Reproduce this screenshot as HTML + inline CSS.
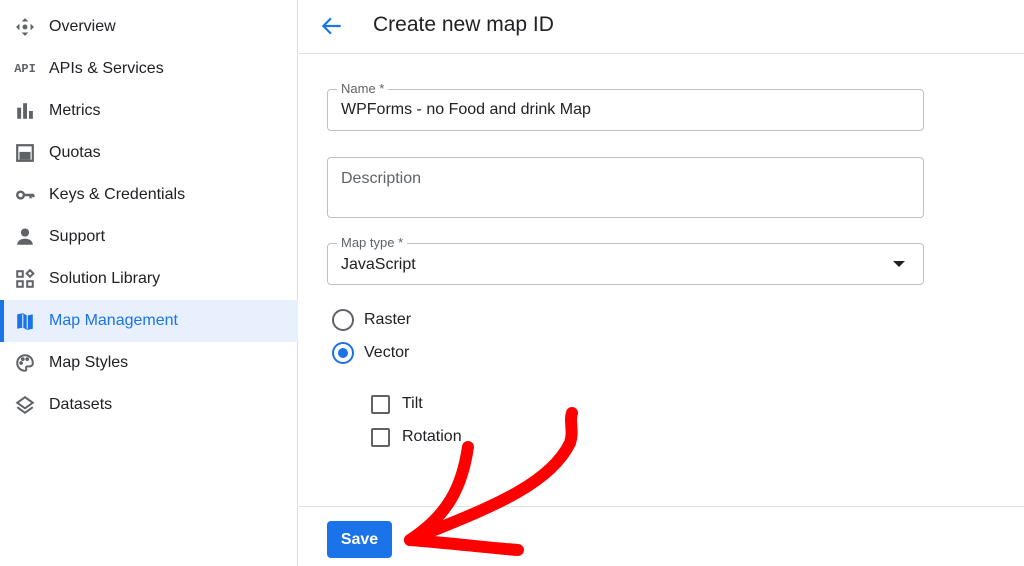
<!DOCTYPE html>
<html><head><style>
*{box-sizing:border-box;margin:0;padding:0}
body{width:1024px;height:566px;overflow:hidden;background:#fff;font-family:"Liberation Sans",Arial,sans-serif;color:#202124;position:relative}
.sb{position:absolute;left:0;top:0;width:298px;height:566px;border-right:1px solid #e0e0e0}
.it{position:absolute;left:0;width:298px;height:42px;display:flex;align-items:center;font-size:16px;color:#202124}
.it .ic{position:absolute;left:15px;width:20px;height:20px;display:flex;align-items:center;justify-content:center;color:#5f6368}
.it span.t{position:absolute;left:49px}
.act{background:#e8f0fe;color:#1a73e8}
.act:before{content:"";position:absolute;left:0;top:0;width:4px;height:42px;background:#1a73e8}
.hd{position:absolute;left:299px;top:0;right:0;height:54px;border-bottom:1px solid #e0e0e0}
.fld{position:absolute;left:327px;width:597px;border:1px solid #bdc1c6;border-radius:4px}
.lbl{position:absolute;left:9px;top:-9px;background:#fff;padding:0 4px;font-size:13px;color:#5f6368}
.val{position:absolute;left:13px;font-size:16px;color:#202124}
.rad{position:absolute;left:332px;width:22px;height:22px;border:2px solid #5f6368;border-radius:50%}
.cb{position:absolute;left:371px;width:19px;height:19px;border:2px solid #5f6368;border-radius:2px}
.lt{position:absolute;font-size:16px;color:#202124}
</style></head><body>
<div class="sb">
<div class="it" style="top:6px"><div class="ic"><svg width="20" height="20" viewBox="0 0 18 18" fill="#5f6368"><path d="M9 1l3 3H6zM9 17l-3-3h6zM1 9l3-3v6zM17 9l-3 3V6z"/><circle cx="9" cy="9" r="2.2"/></svg></div><span class="t">Overview</span></div>
<div class="it" style="top:48px"><div class="ic" style="font-family:'Liberation Mono',monospace;font-size:12px;font-weight:bold;width:24px;left:13px">API</div><span class="t">APIs &amp; Services</span></div>
<div class="it" style="top:90px"><div class="ic"><svg width="20" height="20" viewBox="0 0 18 18" fill="#5f6368"><rect x="2" y="6" width="3.5" height="10"/><rect x="7.3" y="2" width="3.5" height="14"/><rect x="12.6" y="9" width="3.5" height="7"/></svg></div><span class="t">Metrics</span></div>
<div class="it" style="top:132px"><div class="ic"><svg width="20" height="20" viewBox="0 0 18 18" fill="none" stroke="#5f6368" stroke-width="2"><rect x="2" y="2" width="14" height="14"/><rect x="4" y="8" width="10" height="7" fill="#5f6368" stroke="none"/></svg></div><span class="t">Quotas</span></div>
<div class="it" style="top:174px"><div class="ic"><svg width="20" height="20" viewBox="0 0 18 18" fill="none" stroke="#5f6368" stroke-width="2.2"><circle cx="5" cy="9" r="3"/><path d="M8 9h9M14 9v3M16.5 9v2"/></svg></div><span class="t">Keys &amp; Credentials</span></div>
<div class="it" style="top:216px"><div class="ic"><svg width="20" height="20" viewBox="0 0 18 18" fill="#5f6368"><circle cx="9" cy="5" r="3.7"/><path d="M2 16c0-4 4-5.5 7-5.5s7 1.5 7 5.5z"/></svg></div><span class="t">Support</span></div>
<div class="it" style="top:258px"><div class="ic"><svg width="20" height="20" viewBox="0 0 18 18" fill="none" stroke="#5f6368" stroke-width="1.8"><rect x="2" y="2" width="5" height="5"/><rect x="2" y="11" width="5" height="5"/><rect x="11" y="11" width="5" height="5"/><path d="M13.5 1l3 3-3 3-3-3z"/></svg></div><span class="t">Solution Library</span></div>
<div class="it act" style="top:300px"><div class="ic"><svg width="20" height="20" viewBox="0 0 18 18" fill="#1a73e8"><path d="M2 3l5-1 4 2 5-1v13l-5 1-4-2-5 1z"/><path d="M7 3v12M11 4v12" stroke="#e8f0fe" stroke-width="1"/></svg></div><span class="t">Map Management</span></div>
<div class="it" style="top:342px"><div class="ic"><svg width="20" height="20" viewBox="0 0 18 18" fill="none" stroke="#5f6368" stroke-width="1.8"><path d="M9 2a7 7 0 1 0 0 14c1 0 1.5-1 1-2s0-2 1.5-2H14a3 3 0 0 0 2-3c0-4-3-7-7-7z"/><circle cx="5.5" cy="9" r=".8" fill="#5f6368"/><circle cx="7" cy="5.5" r=".8" fill="#5f6368"/><circle cx="11" cy="5.5" r=".8" fill="#5f6368"/></svg></div><span class="t">Map Styles</span></div>
<div class="it" style="top:384px"><div class="ic"><svg width="20" height="20" viewBox="0 0 18 18" fill="none" stroke="#5f6368" stroke-width="1.8"><path d="M9 2l7 5-7 5-7-5z"/><path d="M2 11l7 5 7-5"/></svg></div><span class="t">Datasets</span></div>
</div>
<div class="hd">
<svg style="position:absolute;left:20px;top:13px" width="26" height="26" viewBox="0 0 24 24" fill="none" stroke="#1a73e8" stroke-width="2"><path d="M20 12H5M11 5l-7 7 7 7"/></svg>
<div style="position:absolute;left:74px;top:13px;font-size:21px;color:#202124">Create new map ID</div>
</div>
<div class="fld" style="top:89px;height:42px"><div class="lbl">Name *</div><div class="val" style="top:11px">WPForms - no Food and drink Map</div></div>
<div class="fld" style="top:157px;height:61px"><div class="val" style="top:12px;color:#5f6368">Description</div></div>
<div class="fld" style="top:243px;height:42px"><div class="lbl">Map type *</div><div class="val" style="top:12px">JavaScript</div><div style="position:absolute;right:18px;top:17px;border-left:6px solid transparent;border-right:6px solid transparent;border-top:6px solid #202124"></div></div>
<div class="rad" style="top:309px"></div><div class="lt" style="left:364px;top:311px">Raster</div>
<div class="rad" style="top:342px;border-color:#1a73e8"><div style="position:absolute;left:4px;top:4px;width:10px;height:10px;border-radius:50%;background:#1a73e8"></div></div><div class="lt" style="left:364px;top:344px">Vector</div>
<div class="cb" style="top:395px"></div><div class="lt" style="left:402px;top:395px">Tilt</div>
<div class="cb" style="top:428px"></div><div class="lt" style="left:402px;top:428px">Rotation</div>
<div style="position:absolute;left:299px;right:0;top:506px;border-top:1px solid #e0e0e0"></div>
<div style="position:absolute;left:327px;top:521px;width:65px;height:37px;background:#1a73e8;border-radius:4px;color:#fff;font-weight:bold;font-size:16px;text-align:center;line-height:37px">Save</div>
<svg style="position:absolute;left:0;top:0" width="1024" height="566" fill="none" stroke="#f00" stroke-width="12" stroke-linecap="round" stroke-linejoin="round"><path d="M572 413c-3 8 2 18-2 30-22 45-90 68-160 97"/><path d="M468 447c-6 40-20 68-58 93"/><path d="M410 540c40 3 80 8 108 10"/></svg>
</body></html>
